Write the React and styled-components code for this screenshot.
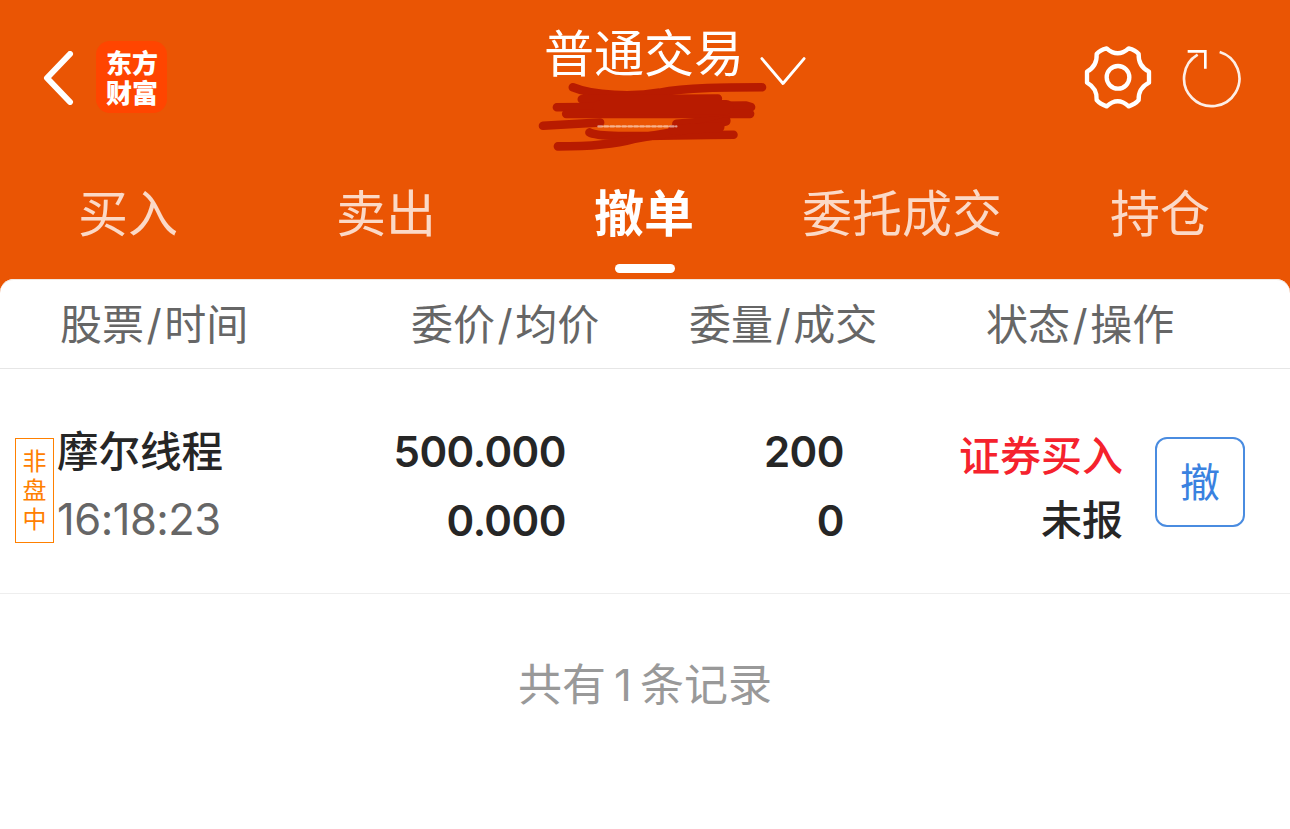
import React from 'react'
import styled, { createGlobalStyle } from 'styled-components'

const GlobalStyle = createGlobalStyle`
  html, body {
    margin: 0;
    padding: 0;
    background: #fff;
    font-family: Inter, "Noto Sans CJK SC", sans-serif;
  }
  * { box-sizing: border-box; }
`

const Page = styled.div`
  width: 1290px;
  height: 829px;
  overflow: hidden;
  background: #ea5504;
`

const Header = styled.header`
  height: 279px;
  background: #ea5504;
  display: flex;
  flex-direction: column;
`

const TopBar = styled.div`
  height: 156px;
  display: grid;
  grid-template-columns: 502px 262px 1fr;
  padding: 0 48px 0 42px;
`

const LeftGroup = styled.div`
  display: flex;
  align-items: flex-start;
  gap: 22px;
  padding-top: 41px;
`

const BackIcon = styled.svg`
  width: 32px;
  height: 54px;
  margin-top: 10px;
`

const Logo = styled.div`
  width: 71px;
  height: 72px;
  padding: 6px 9px 0 10px;
  border-radius: 14px;
  background: #ff4500;
  color: #fff;
  font-family: "Noto Sans CJK SC", sans-serif;
  font-weight: 900;
  font-size: 26px;
  line-height: 30px;
  text-align: center;
  overflow: hidden;
`

const TitleBlock = styled.div`
  position: relative;
`

const Title = styled.div`
  display: flex;
  align-items: flex-start;
  gap: 16px;
  padding-top: 19px;
  color: #fff;
  font-family: "Noto Sans CJK SC", sans-serif;
  font-size: 50px;
  line-height: 62px;
  white-space: nowrap;
`

const Chevron = styled.svg`
  width: 48px;
  height: 34px;
  margin-top: 36px;
`

const Scribble = styled.svg`
  position: absolute;
  left: -11px;
  top: 80px;
  width: 237px;
  height: 73px;
`

const RightGroup = styled.div`
  display: flex;
  align-items: flex-start;
  justify-content: flex-end;
  gap: 29px;
  padding-top: 44px;
`

const GearIcon = styled.svg`
  width: 69px;
  height: 68px;
`

const RefreshIcon = styled.svg`
  width: 60px;
  height: 62px;
  margin-top: 3px;
`

const TabBar = styled.nav`
  display: grid;
  grid-template-columns: repeat(5, 258px);
  margin-left: -1px;
  flex: 1;
`

const Tab = styled.div`
  position: relative;
  display: flex;
  justify-content: center;
  padding-top: 20px;
  font-family: "Noto Sans CJK SC", sans-serif;
  font-size: 50px;
  line-height: 68px;
  font-weight: ${props => (props.$active ? 700 : 400)};
  color: ${props => (props.$active ? '#fff' : 'rgba(255, 255, 255, 0.78)')};
`

const TabMarker = styled.span`
  position: absolute;
  left: 100px;
  bottom: 6px;
  width: 60px;
  height: 9px;
  border-radius: 5px;
  background: #fff;
`

const Body = styled.main`
  height: 550px;
  background: #fff;
  border-radius: 14px 14px 0 0;
  box-shadow: inset 0 1px 0 #f1e7e0;
`

const ColumnHead = styled.div`
  height: 90px;
  display: grid;
  grid-template-columns: 60px 351px 278px 297px 1fr;
  align-items: center;
  padding-bottom: 4px;
  border-bottom: 1px solid #e6e6e6;
  color: #666;
  font-size: 42px;
  font-family: Inter, "Noto Sans CJK SC", sans-serif;
  font-weight: 400;
`

const HeadCell = styled.div`
  grid-column: ${props => props.$col};
  white-space: nowrap;
`

const Slash = styled.span`
  margin: 0 2.5px;
`

const Row = styled.div`
  height: 225px;
  border-bottom: 1px solid #eeeeee;
  display: flex;
  align-items: flex-start;
`

const SessionTag = styled.div`
  width: 39px;
  height: 105px;
  margin: 69px 3px 0 15px;
  padding-top: 3px;
  border: 1px solid #ff8000;
  color: #ff8000;
  font-family: "Noto Sans CJK SC", sans-serif;
  font-size: 24px;
  line-height: 37px;
  letter-spacing: 5px;
  writing-mode: vertical-rl;
  display: flex;
  align-items: center;
  justify-content: center;
`

const Cell = styled.div`
  width: ${props => props.$w}px;
  padding-top: ${props => props.$top || 48}px;
  display: flex;
  flex-direction: column;
  align-items: ${props => (props.$right ? 'flex-end' : 'flex-start')};
`

const Line = styled.div`
  height: ${props => props.$h || 69}px;
  line-height: ${props => props.$h || 69}px;
  font-size: ${props => props.$size || 42}px;
  font-family: ${props => (props.$cjk ? '"Noto Sans CJK SC", sans-serif' : 'Inter, sans-serif')};
  font-weight: ${props => props.$weight || 600};
  letter-spacing: ${props => (props.$cjk ? 0 : -0.5)}px;
  color: ${props => props.$color || '#262626'};
  white-space: nowrap;
`

const CancelButton = styled.button`
  width: 90px;
  height: 90px;
  margin: 68px 0 0 32px;
  padding: 0 0 4px;
  background: #fff;
  border: 2px solid #4a8ce0;
  border-radius: 12px;
  color: #3a82e0;
  font-family: "Noto Sans CJK SC", sans-serif;
  font-size: 40px;
  line-height: 1;
`

const Footer = styled.div`
  padding-top: 61px;
  text-align: center;
  color: #999;
  font-size: 44px;
  line-height: 60px;
  font-family: Inter, "Noto Sans CJK SC", sans-serif;
`

const FooterCount = styled.span`
  margin: 0 8px;
`

const tabs = ['买入', '卖出', '撤单', '委托成交', '持仓']
const columns = [
  ['股票', '时间'],
  ['委价', '均价'],
  ['委量', '成交'],
  ['状态', '操作']
]

export default function App() {
  return (
    <Page>
      <GlobalStyle />
      <Header>
        <TopBar>
          <LeftGroup>
            <BackIcon viewBox="0 0 32 54" fill="none">
              <path d="M28 3 L5 27 L28 51" stroke="#fff" strokeWidth="6" strokeLinecap="round" strokeLinejoin="round" />
            </BackIcon>
            <Logo>东方财富</Logo>
          </LeftGroup>
          <TitleBlock>
            <Title>
              普通交易
              <Chevron viewBox="0 0 48 34" fill="none">
                <path d="M2 3 L24 29 L46 3" stroke="#fff" strokeWidth="3" strokeLinecap="round" strokeLinejoin="round" />
              </Chevron>
            </Title>
            <Scribble viewBox="100 210 710 220" fill="none" strokeLinecap="round" strokeLinejoin="round">
              <g stroke="#b81b00" strokeWidth="26">
                <path d="M218 232 C280 258 400 262 480 248 C560 232 680 232 788 232" />
                <path d="M245 268 L655 266" />
                <path d="M170 292 L740 287 L755 292" />
                <path d="M198 312 L752 312" />
                <path d="M128 348 L300 338" />
                <path d="M530 342 L680 330" />
                <path d="M268 368 C300 388 500 375 702 375" />
                <path d="M173 410 C260 410 340 405 400 388 C480 372 600 358 680 335" />
              </g>
              <path d="M300 292 L680 292" stroke="#b81b00" strokeWidth="44" />
              <path d="M520 360 L660 352" stroke="#b81b00" strokeWidth="30" />
              <path d="M295 350 L530 350" stroke="#fff" strokeWidth="7" strokeDasharray="11 7" opacity="0.55" />
            </Scribble>
          </TitleBlock>
          <RightGroup>
            <GearIcon viewBox="70 72 207 204" fill="none" stroke="#fff" strokeWidth="13" strokeLinejoin="round">
              <path d="M138 85 Q171 115 204 85 Q224 90 234 102 Q232 138 265 155 L265 188 Q232 205 234 240 Q224 252 204 259 Q171 229 138 259 Q118 252 108 240 Q110 205 79 188 L79 155 Q110 138 108 102 Q118 90 138 85 Z" />
              <circle cx="172" cy="172" r="34" />
            </GearIcon>
            <RefreshIcon viewBox="365 80 180 186" fill="none" stroke="#fff" strokeWidth="8">
              <path d="M478 95 A83 83 0 1 1 412 103" opacity="0.9" />
              <path d="M382 93 H435 V145" />
            </RefreshIcon>
          </RightGroup>
        </TopBar>
        <TabBar>
          {tabs.map(name => (
            <Tab key={name} $active={name === '撤单'}>
              {name}
              {name === '撤单' && <TabMarker />}
            </Tab>
          ))}
        </TabBar>
      </Header>
      <Body>
        <ColumnHead>
          {columns.map(([first, second], index) => (
            <HeadCell key={first} $col={index + 2}>
              {first}
              <Slash>/</Slash>
              {second}
            </HeadCell>
          ))}
        </ColumnHead>
        <Row>
          <SessionTag>非盘中</SessionTag>
          <Cell $w={200} $top={45}>
            <Line $cjk $weight={500} $size={41.5} $h={71}>摩尔线程</Line>
            <Line $color="#666" $weight={400} $size={43.5}>16:18:23</Line>
          </Cell>
          <Cell $w={309} $right>
            <Line>500.000</Line>
            <Line>0.000</Line>
          </Cell>
          <Cell $w={278} $right>
            <Line>200</Line>
            <Line>0</Line>
          </Cell>
          <Cell $w={279} $right $top={52}>
            <Line $cjk $size={41} $color="#f5222d" $h={64} $weight={500}>证券买入</Line>
            <Line $cjk $size={41} $h={64} $weight={500}>未报</Line>
          </Cell>
          <CancelButton>撤</CancelButton>
        </Row>
        <Footer>
          共有<FooterCount>1</FooterCount>条记录
        </Footer>
      </Body>
    </Page>
  )
}
